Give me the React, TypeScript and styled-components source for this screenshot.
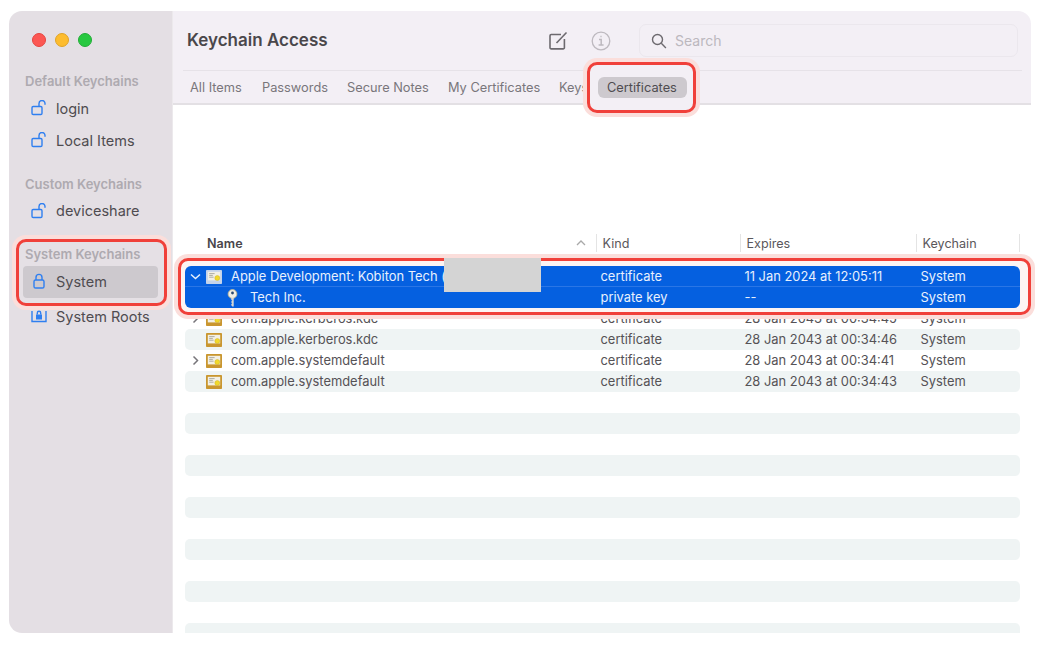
import React from 'react';
import styled, { createGlobalStyle } from 'styled-components';

const GlobalStyle = createGlobalStyle`
  html, body {
    margin: 0;
    padding: 0;
    background: #fff;
    font-family: Inter, "Liberation Sans", sans-serif;
    -webkit-font-smoothing: antialiased;
  }
`;

// Window shell
const Page = styled.div`
  width: 1044px;
  height: 649px;
  padding: 11px 13px 16px 9px;
  box-sizing: border-box;
  overflow: hidden;
`;

const Window = styled.div`
  display: flex;
  height: 622px;
`;

// Sidebar
const Sidebar = styled.aside`
  width: 164px;
  flex: none;
  box-sizing: border-box;
  padding: 22px 14px 0 14px;
  background: #e4dfe4;
  border-right: 1px solid #ece9ec;
  border-radius: 13px 0 0 13px;
`;

const Lights = styled.div`
  display: flex;
  gap: 9px;
  height: 14px;
  padding-left: 9px;
  margin-bottom: 26px;
`;

const Light = styled.span<{ $color: string; $edge: string }>`
  width: 14px;
  height: 14px;
  box-sizing: border-box;
  border-radius: 50%;
  background: ${(p) => p.$color};
  border: 1px solid ${(p) => p.$edge};
`;

const Section = styled.section`
  margin-bottom: 18.5px;
`;

const SectionLabel = styled.div`
  height: 16px;
  line-height: 16px;
  margin: 0 0 4px 2px;
  font-size: 13px;
  font-weight: 600;
  color: #aeaab0;
  white-space: nowrap;
`;

const SideItem = styled.div<{ $active?: boolean }>`
  display: flex;
  align-items: center;
  gap: 9px;
  height: 32px;
  box-sizing: border-box;
  padding: 0 0 2px 8px;
  border-radius: 4px;
  font-size: 14.5px;
  color: #4f4c50;
  background: ${(p) => (p.$active ? '#cdc9ce' : 'transparent')};
`;

const SideIcon = styled.svg`
  width: 16px;
  height: 16px;
  flex: none;
  fill: none;
  stroke: #2f7ff0;
  stroke-width: 1.4;
`;

// Red callouts pasted over the screenshot
const Callout = styled.div<{ $inset: string }>`
  position: relative;
  z-index: 2;

  &::before {
    content: '';
    position: absolute;
    inset: ${(p) => p.$inset};
    z-index: -1;
    box-sizing: border-box;
    border: 3px solid #f0403a;
    border-radius: 10px;
    box-shadow: 0 0 0 4px #fbdedb;
    background: var(--callout-bg, #fff);
  }
`;

const SideCallout = styled(Callout)`
  --callout-bg: #e5e0e5;
  margin-bottom: 3px;
`;

const TabCallout = styled(Callout)`
  --callout-bg: #f3eff5;
  width: 89px;
`;

const RowsCallout = styled(Callout)`
  --callout-bg: #fdf4f3;
`;

// Main column
const Main = styled.main`
  flex: 1;
  min-width: 0;
  display: flex;
  flex-direction: column;
`;

const Toolbar = styled.header`
  flex: none;
  height: 94px;
  box-sizing: border-box;
  background: #f3eff5;
  border-bottom: 2px solid #e3e0e4;
  border-radius: 0 13px 0 0;
`;

const ToolbarTop = styled.div`
  display: flex;
  align-items: center;
  height: 60px;
  margin: 0 9px 0 10px;
  padding: 0 4px;
  box-sizing: border-box;
  border-bottom: 1px solid #e6e2e8;
`;

const Title = styled.h1`
  flex: 1;
  margin: 0 0 2px;
  font-size: 17px;
  font-weight: 600;
  color: #4a474b;
`;

const ToolIcon = styled.svg<{ $tone: string; $gap: number }>`
  width: 20px;
  height: 20px;
  flex: none;
  margin-right: ${(p) => p.$gap}px;
  fill: none;
  stroke: ${(p) => p.$tone};
`;

const SearchBox = styled.div`
  display: flex;
  align-items: center;
  gap: 8px;
  width: 379px;
  height: 33px;
  box-sizing: border-box;
  padding-left: 11px;
  border: 1px solid #ebe7ed;
  border-radius: 7px;
  font-size: 14px;
  color: #bcb8be;
`;

const Tabs = styled.nav`
  display: grid;
  grid-template-columns: 72px 85px 101px 111px 39px auto;
  align-items: center;
  height: 32px;
  padding-left: 17px;
  font-size: 12.8px;
  color: #79767b;
`;

const Tab = styled.span`
  white-space: nowrap;
  overflow: hidden;
`;

const ActiveTab = styled.span`
  display: block;
  height: 21px;
  line-height: 21px;
  padding-left: 9px;
  border-radius: 6px;
  background: #cdc9ce;
  color: #4f4c50;
  white-space: nowrap;
`;

// Table
const TableArea = styled.div`
  flex: 1;
  min-height: 0;
  padding: 129px 11px 0 12px;
  background: #fff;
`;

const columns = 'grid-template-columns: 411px 144px 176px 104px;';

const HeaderRow = styled.div`
  display: grid;
  ${columns}
  height: 18px;
  margin-bottom: 14px;
  font-size: 12.6px;
  color: #5a575b;
`;

const HeaderCell = styled.div<{ $first?: boolean; $last?: boolean }>`
  display: flex;
  align-items: center;
  justify-content: space-between;
  padding-left: ${(p) => (p.$first ? 22 : 5.5)}px;
  padding-right: 10px;
  border-left: ${(p) => (p.$first ? 'none' : '1px solid #e4e4e4')};
  border-right: ${(p) => (p.$last ? '1px solid #e4e4e4' : 'none')};
  font-weight: ${(p) => (p.$first ? 600 : 400)};
  color: ${(p) => (p.$first ? '#4a474b' : '#5a575b')};
`;

const Row = styled.div<{ $striped?: boolean; $height?: number }>`
  display: grid;
  ${columns}
  align-items: center;
  height: ${(p) => p.$height ?? 21}px;
  border-radius: ${(p) => (p.$height ? '5px 5px 0 0' : '5px')};
  background: ${(p) => (p.$striped ? '#eff4f4' : 'transparent')};
  font-size: 12.9px;
  color: #555256;
  white-space: nowrap;
`;

const SelectedGroup = styled.div`
  position: relative;
  border-radius: 6px;
  background: #0560e0;
`;

const SelectedRow = styled(Row)<{ $divided?: boolean }>`
  color: #e8f0fd;
  background: transparent;
  border-radius: 0;
  box-shadow: ${(p) => (p.$divided ? 'inset 0 -1px 0 #2a76e6' : 'none')};
`;

const NameCell = styled.div`
  display: flex;
  align-items: center;
  padding-left: 5px;
`;

const Cell = styled.div`
  padding-left: 4.5px;
`;

const ChevronSlot = styled.svg<{ $tone: string }>`
  width: 11px;
  height: 11px;
  flex: none;
  margin-right: 5px;
  fill: none;
  stroke: ${(p) => p.$tone};
  stroke-width: 1.5;
`;

const CertIcon = styled.svg`
  width: 16px;
  height: 16px;
  flex: none;
  margin-right: 9px;
`;

const KeyIcon = styled.svg`
  width: 11px;
  height: 18px;
  flex: none;
  margin: 0 12px 0 37px;
`;

const Redaction = styled.div`
  position: absolute;
  left: 259px;
  top: -8px;
  width: 97px;
  height: 34px;
  background: #d4d4d4;
`;

const UnlockedIcon = () => (
  <SideIcon viewBox="0 0 16 16">
    <rect x="1" y="6.5" width="10" height="8" rx="1.2" />
    <path d="M8 6.5V3.6a3 3 0 0 1 6-.2v1.4" />
  </SideIcon>
);

const LockedIcon = () => (
  <SideIcon viewBox="0 0 16 16">
    <rect x="3" y="7" width="10" height="8" rx="1.6" />
    <path d="M5 7V4.4a3 3 0 0 1 6 0V7" />
  </SideIcon>
);

const RootsIcon = () => (
  <SideIcon viewBox="0 0 16 16">
    <path d="M1 3v10.5h14V3" />
    <rect x="5" y="6.5" width="6" height="5" fill="#2f7ff0" stroke="none" />
    <path d="M6.3 6.5V5a1.7 1.7 0 0 1 3.4 0v1.5" />
  </SideIcon>
);

const Certificate = ({ selected }: { selected?: boolean }) => (
  <CertIcon viewBox="0 0 16 16">
    <rect x="0" y="1" width="16" height="14" rx="0.8" fill={selected ? '#c4d3ea' : '#c9962f'} />
    <rect x="1.8" y="2.8" width="12.4" height="8.6" fill="#f3f0e4" />
    <path d="M3.2 4.6h5.4M3.2 6.4h3.6M3.2 8.2h4.4" stroke="#9a9a92" strokeWidth="0.8" />
    <circle cx="11.3" cy="9" r="2.5" fill="#f1d92c" stroke="#c7a91d" strokeWidth="0.4" />
  </CertIcon>
);

const PrivateKey = () => (
  <KeyIcon viewBox="0 0 11 18">
    <circle cx="5.5" cy="5" r="4.4" fill="#f0eee6" stroke="#c7b98a" strokeWidth="0.8" />
    <circle cx="5.5" cy="4" r="1.4" fill="#2c4a6e" />
    <path d="M4.3 9h2.4v8.4H5.3L4.3 16.2V15l1-.8-1-.8v-1l1-.7-1-.8z" fill="#d9d8d2" />
  </KeyIcon>
);

const ChevronRight = () => (
  <ChevronSlot $tone="#77757a" viewBox="0 0 11 11">
    <path d="M3.5 1.5l4 4-4 4" />
  </ChevronSlot>
);

const ChevronDown = () => (
  <ChevronSlot $tone="#e8f0fd" viewBox="0 0 11 11">
    <path d="M1 3.5l4.5 4 4.5-4" />
  </ChevronSlot>
);

const EmptySlot = () => <ChevronSlot $tone="transparent" viewBox="0 0 11 11" />;

const certRows = [
  { name: 'com.apple.kerberos.kdc', expires: '28 Jan 2043 at 00:34:45', open: true },
  { name: 'com.apple.kerberos.kdc', expires: '28 Jan 2043 at 00:34:46', striped: true },
  { name: 'com.apple.systemdefault', expires: '28 Jan 2043 at 00:34:41', open: true },
  { name: 'com.apple.systemdefault', expires: '28 Jan 2043 at 00:34:43', striped: true },
];

export default function App() {
  return (
    <>
      <GlobalStyle />
      <Page>
        <Window>
          <Sidebar>
            <Lights>
              <Light $color="#fc5753" $edge="#e6443f" />
              <Light $color="#fdbc2e" $edge="#e0a326" />
              <Light $color="#27c840" $edge="#22ad37" />
            </Lights>
            <Section>
              <SectionLabel>Default Keychains</SectionLabel>
              <SideItem>
                <UnlockedIcon />
                login
              </SideItem>
              <SideItem>
                <UnlockedIcon />
                Local Items
              </SideItem>
            </Section>
            <Section>
              <SectionLabel>Custom Keychains</SectionLabel>
              <SideItem>
                <UnlockedIcon />
                deviceshare
              </SideItem>
            </Section>
            <SideCallout $inset="-7px -9px -8px -7px">
              <SectionLabel>System Keychains</SectionLabel>
              <SideItem $active>
                <LockedIcon />
                System
              </SideItem>
            </SideCallout>
            <SideItem>
              <RootsIcon />
              System Roots
            </SideItem>
          </Sidebar>

          <Main>
            <Toolbar>
              <ToolbarTop>
                <Title>Keychain Access</Title>
                <ToolIcon $tone="#6d6a6f" $gap={23} viewBox="0 0 20 20" strokeWidth="1.6">
                  <path d="M13 3.5H3.2a1.2 1.2 0 0 0-1.2 1.2v12a1.2 1.2 0 0 0 1.2 1.2h12a1.2 1.2 0 0 0 1.2-1.2V8" />
                  <path d="M8.5 12l10-10.5" />
                </ToolIcon>
                <ToolIcon $tone="#bdb9bf" $gap={28} viewBox="0 0 20 20" strokeWidth="1.3">
                  <circle cx="10" cy="10" r="8.8" />
                  <path d="M8 8.6h2.2v5.2M7.6 14h5M9.4 5.6h1.2" strokeWidth="1.5" />
                </ToolIcon>
                <SearchBox>
                  <svg width="16" height="16" viewBox="0 0 16 16" fill="none" stroke="#6d6a6f" strokeWidth="1.4">
                    <circle cx="6.5" cy="6.5" r="5" />
                    <path d="M10.3 10.3l4.6 4.6" />
                  </svg>
                  Search
                </SearchBox>
              </ToolbarTop>
              <Tabs>
                <Tab>All Items</Tab>
                <Tab>Passwords</Tab>
                <Tab>Secure Notes</Tab>
                <Tab>My Certificates</Tab>
                <Tab>Keys</Tab>
                <TabCallout $inset="-15px -9px -15px -11px">
                  <ActiveTab>Certificates</ActiveTab>
                </TabCallout>
              </Tabs>
            </Toolbar>

            <TableArea>
              <HeaderRow>
                <HeaderCell $first>
                  Name
                  <svg width="10" height="6" viewBox="0 0 10 6" fill="none" stroke="#a9a9a9" strokeWidth="1.3">
                    <path d="M1 5l4-4 4 4" />
                  </svg>
                </HeaderCell>
                <HeaderCell>Kind</HeaderCell>
                <HeaderCell>Expires</HeaderCell>
                <HeaderCell $last>Keychain</HeaderCell>
              </HeaderRow>

              <RowsCallout $inset="-8px -11px -7px -7px">
                <SelectedGroup>
                  <SelectedRow $divided>
                    <NameCell>
                      <ChevronDown />
                      <Certificate selected />
                      Apple Development: Kobiton Tech (
                    </NameCell>
                    <Cell>certificate</Cell>
                    <Cell>11 Jan 2024 at 12:05:11</Cell>
                    <Cell>System</Cell>
                  </SelectedRow>
                  <SelectedRow>
                    <NameCell>
                      <PrivateKey />
                      Tech Inc.
                    </NameCell>
                    <Cell>private key</Cell>
                    <Cell>--</Cell>
                    <Cell>System</Cell>
                  </SelectedRow>
                  <Redaction />
                </SelectedGroup>
              </RowsCallout>

              {certRows.map((r, i) => (
                <Row key={i} $striped={r.striped}>
                  <NameCell>
                    {r.open ? <ChevronRight /> : <EmptySlot />}
                    <Certificate />
                    {r.name}
                  </NameCell>
                  <Cell>certificate</Cell>
                  <Cell>{r.expires}</Cell>
                  <Cell>System</Cell>
                </Row>
              ))}

              {[0, 1, 2, 3, 4, 5, 6, 7, 8, 9, 10].map((i) => (
                <Row key={i} $striped={i % 2 === 1} />
              ))}
              <Row $striped $height={10} />
            </TableArea>
          </Main>
        </Window>
      </Page>
    </>
  );
}
